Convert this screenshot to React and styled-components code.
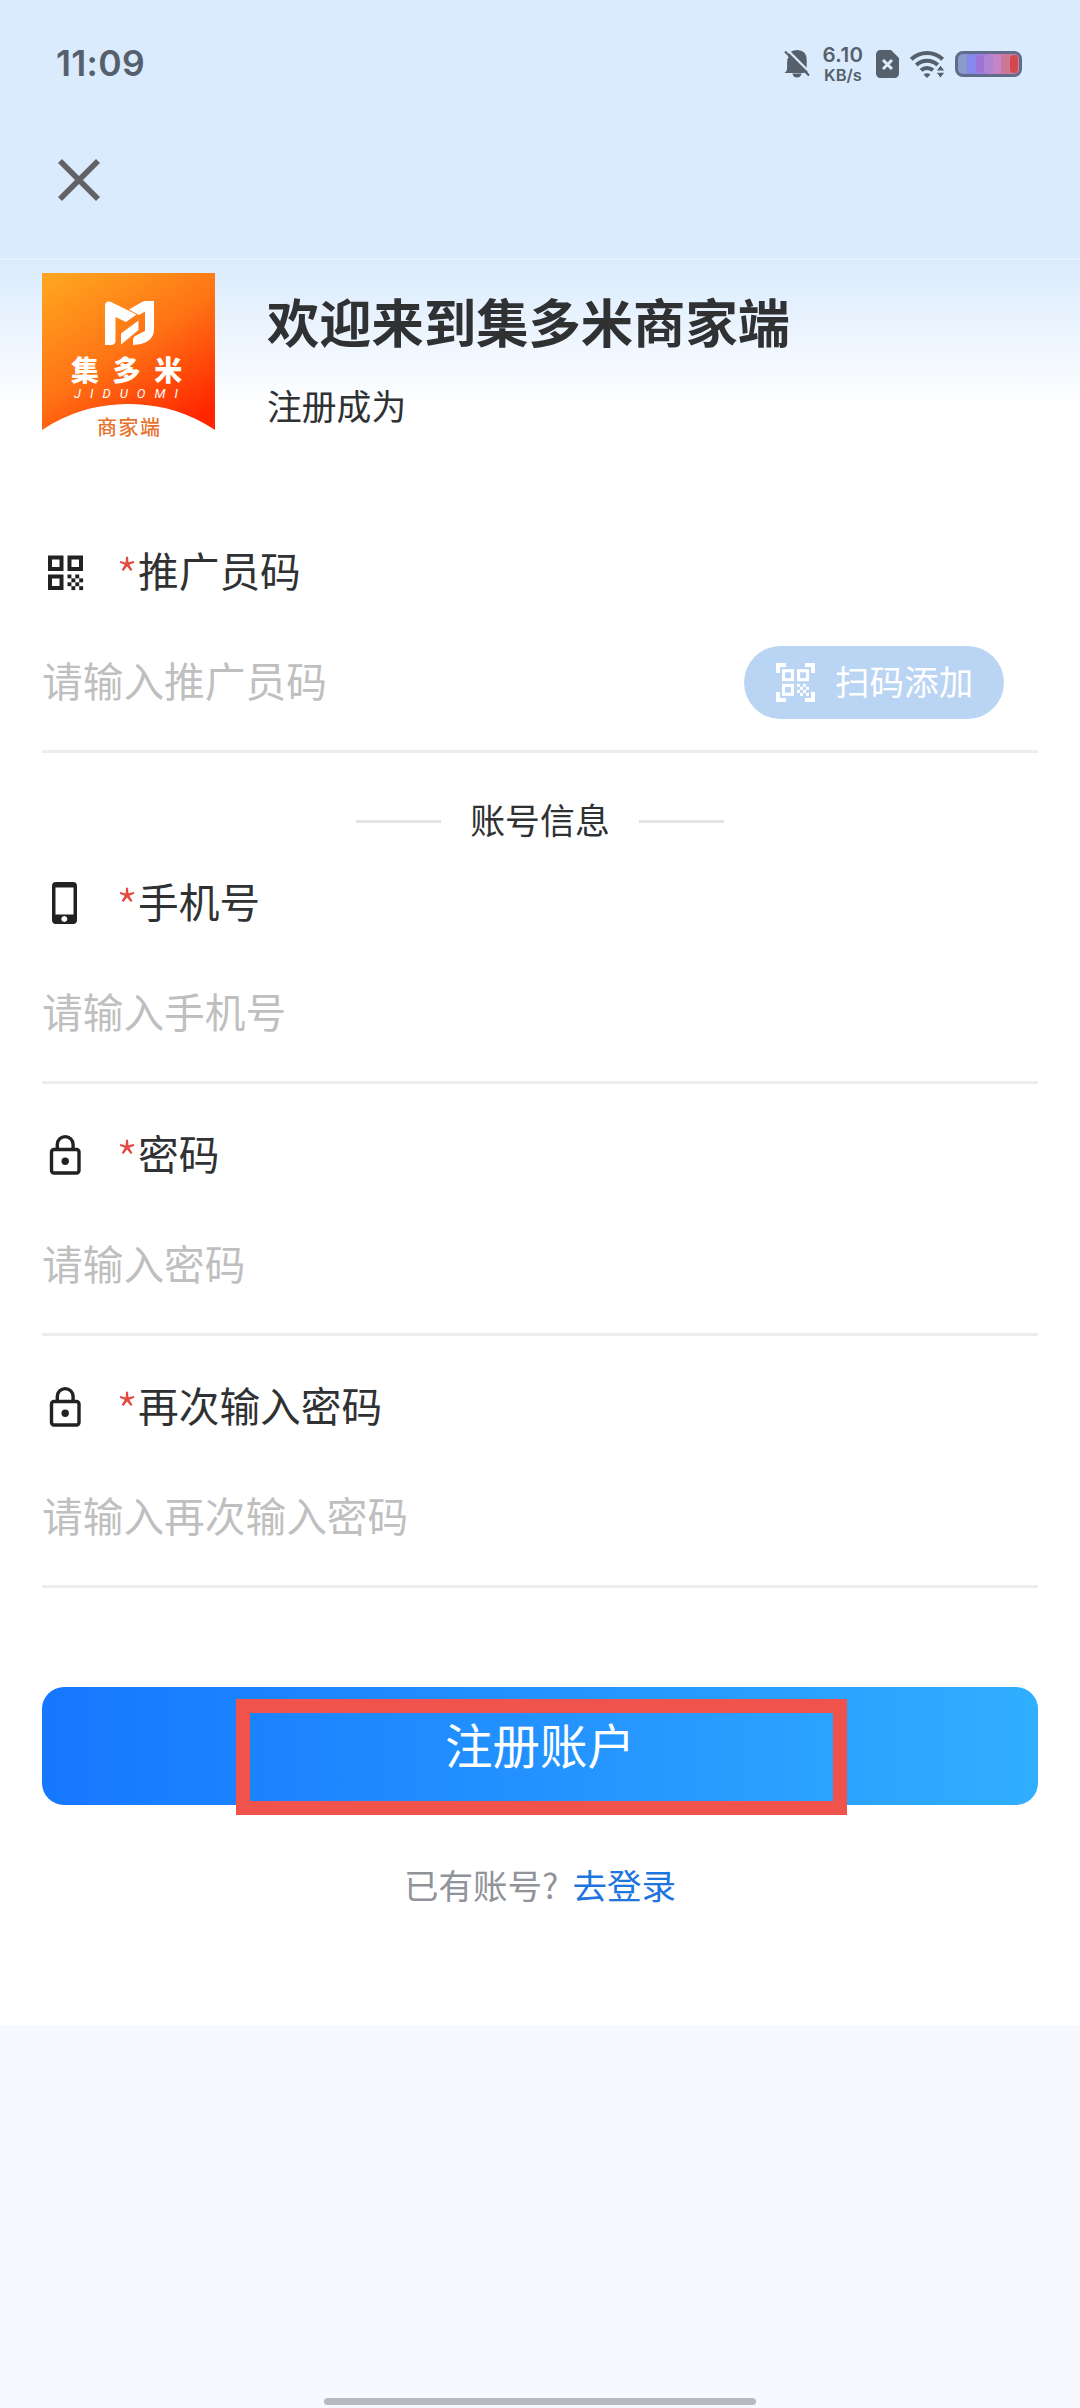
import React from "react";
import styled, { createGlobalStyle } from "styled-components";

const fields = [
  { name: "phone", label: "手机号", icon: "phone" },
  { name: "password", label: "密码", icon: "lock" },
  { name: "confirm", label: "再次输入密码", icon: "lock" },
];

const batteryColors = ["#8a9cc9", "#8787ec", "#9f74d9", "#b184d2", "#c684cb", "#cc7798", "#d4474f"];

const StatusIcons = () => {
  return (
    <StatusRight>
      <svg width="26" height="30" viewBox="0 0 26 30">
        <path d="M3.300 23.500V11Q3.300 1 13 1t9.700 10v8.500L24 22v1.500z" fill="#56606c" />
        <path d="M0.500 24q2.800-2 2.800-5v-6h6l11 11z" fill="#56606c" />
        <path d="M8.500 24.500h9a4.500 4 0 0 1-9 0z" fill="#56606c" />
        <path d="M3 0.500l24 24M0 5l4 4" stroke="#daebfd" strokeWidth="2.200" fill="none" />
        <path d="M1 2.500l24 24" stroke="#56606c" strokeWidth="2.200" fill="none" />
      </svg>
      <Speed>
        <b>6.10</b>
        <span>KB/s</span>
      </Speed>
      <svg width="23" height="28" viewBox="0 0 23 28">
        <path d="M4.500 0H15l8 8v15.500a4.500 4.500 0 0 1-4.500 4.500h-14A4.500 4.500 0 0 1 0 23.500v-19A4.500 4.500 0 0 1 4.500 0z" fill="#56606c" />
        <path d="M7 10l9 9M16 10l-9 9" stroke="#daebfd" strokeWidth="3" />
      </svg>
      <Wifi width="35" height="28" viewBox="0 0 35 28">
        <g fill="none" stroke="#56606c" strokeWidth="4">
          <path d="M1.300 9.300a22.500 22.500 0 0 1 31.400 0" />
          <path d="M6.300 15a15.500 15.500 0 0 1 21.400 0" />
          <path d="M11 20.300a9 9 0 0 1 12 0" />
        </g>
        <path d="M13.500 24.500q3.500-2.500 7 0L17 28z" fill="#56606c" />
        <path d="M26 21l4.500-6 4.500 6zM26 22.200h9l-4.500 6z" fill="#56606c" stroke="#daebfd" strokeWidth="1" />
      </Wifi>
      <Battery>
        {batteryColors.map((e, idx) => {
          return <Cell key={idx} $color={e} />;
        })}
      </Battery>
    </StatusRight>
  );
};

const Logo = () => {
  return (
    <svg width="173" height="173" viewBox="0 0 173 173">
      <defs>
        <linearGradient id="orange" x1="0.100" y1="0" x2="0.800" y2="1">
          <stop offset="0" stopColor="#ffa41f" />
          <stop offset="0.500" stopColor="#ff7415" />
          <stop offset="1" stopColor="#ff2500" />
        </linearGradient>
      </defs>
      <path d="M0 0H173V157Q134 131 86.500 131T0 157z" fill="url(#orange)" />
      <path d="M0 158Q39 131.500 86.500 131.500T173 158V173H0z" fill="#fff" />
      <g fill="#fff">
        <path d="M63 33q0-4 3-4.500 3-.4 5 1.500L94.500 41.500 84 49 73.500 44V68q0 4-5 4h-5.500z" />
        <path d="M87 36.500L100 29q2-1 4-1h8V56q0 8-6 12-5 3.500-15 4V67q0-3 3-4.500l9-4.500V38.500L97 42z" />
        <path d="M79 71.500V60.500l17.500-13v9.500z" />
      </g>
      <text x="29" y="107.500" fontSize="28" fontWeight="900" fill="#fff" letterSpacing="13.600">集多米</text>
      <text x="32" y="124.500" fontSize="13" fontStyle="italic" fontFamily="Roboto" fill="#fff" textLength="104">JIDUOMI</text>
      <text x="55" y="162" fontSize="20" fontWeight="500" fill="#e7742d" letterSpacing="1.500">商家端</text>
    </svg>
  );
};

// checker in the lower right corner of the code
const dots = [[0, 0], [2, 0], [1, 1], [3, 1], [0, 2], [2, 2], [1, 3], [3, 3]];

const QrMark = () => {
  return (
    <>
      <g fill="none" stroke="currentColor" strokeWidth="4">
        <rect x="2" y="2" width="11.500" height="11.500" />
        <rect x="21.500" y="2" width="11.500" height="11.500" />
        <rect x="2" y="21" width="11.500" height="11.500" />
      </g>
      {dots.map(([x, y], idx) => {
        return <rect key={idx} x={19.5 + x * 3.9} y={19 + y * 3.9} width="3.900" height="3.900" fill="currentColor" />;
      })}
    </>
  );
};

const FieldIcon = ({ type }) => {
  if (type === "qr") {
    return (
      <svg width="46" height="44" viewBox="-6 -5.500 46 44" color="#222">
        <QrMark />
      </svg>
    );
  } else if (type === "phone") {
    return (
      <svg width="46" height="44" viewBox="0 0 46 44">
        <path fillRule="evenodd" d="M14 1h17a4 4 0 0 1 4 4v34a4 4 0 0 1-4 4H14a4 4 0 0 1-4-4V5a4 4 0 0 1 4-4zM13.500 6.500v27h18v-27zM22.300 35a3 3 0 1 0 .01 0z" fill="#222" />
      </svg>
    );
  }
  return (
    <svg width="46" height="44" viewBox="0 0 46 44">
      <rect x="9.500" y="16.500" width="27.500" height="23.500" rx="2.500" fill="none" stroke="#222" strokeWidth="3.400" />
      <path d="M15.300 16v-4.500a7.900 7.900 0 0 1 15.800 0V16" fill="none" stroke="#222" strokeWidth="3.400" />
      <circle cx="23.200" cy="28.200" r="3.700" fill="#222" />
    </svg>
  );
};

const ScanIcon = () => {
  return (
    <svg width="39" height="39" viewBox="0 0 39 39">
      <path d="M2 10V2h8M29 2h8v8M2 29v8h8M29 37h8v-8" fill="none" stroke="#fff" strokeWidth="4" />
      <svg x="6" y="6" width="27" height="27" viewBox="0 0 35 34.500" color="#fff">
        <QrMark />
      </svg>
    </svg>
  );
};

const Field = ({ label, icon, children }) => {
  return (
    <FieldBox>
      <Label>
        <FieldIcon type={icon} />
        <Star>*</Star>
        <LabelText>{label}</LabelText>
      </Label>
      <InputRow>
        <Placeholder>请输入{label}</Placeholder>
        {children}
      </InputRow>
    </FieldBox>
  );
};

const App = () => {
  return (
    <>
      <GlobalStyle />
      <Page>
        <TopBar>
          <StatusBar>
            <Clock>11:09</Clock>
            <StatusIcons />
          </StatusBar>
          <Close width="42" height="42" viewBox="0 0 42 42">
            <path d="M2 2l38 38M40 2L2 40" stroke="#606266" strokeWidth="5.600" />
          </Close>
        </TopBar>
        <Content>
          <Intro>
            <Logo />
            <div>
              <Title>欢迎来到集多米商家端</Title>
              <SubTitle>注册成为</SubTitle>
            </div>
          </Intro>
          <Field label="推广员码" icon="qr">
            <ScanButton>
              <ScanIcon />
              <ScanText>扫码添加</ScanText>
            </ScanButton>
          </Field>
          <Divider>
            <DividerText>账号信息</DividerText>
          </Divider>
          {fields.map((e) => {
            return <Field key={e.name} label={e.label} icon={e.icon} />;
          })}
          <Submit>
            注册账户
            <Marker />
          </Submit>
          <Login>
            已有账号?<a>去登录</a>
          </Login>
        </Content>
        <Footer>
          <HomeBar />
        </Footer>
      </Page>
    </>
  );
};

const GlobalStyle = createGlobalStyle`
  * {
    box-sizing: border-box;
  }
  body {
    margin: 0;
    font-family: "Noto Sans CJK SC", sans-serif;
    color: #303133;
  }
  svg {
    display: block;
    flex-shrink: 0;
  }
`;

const Page = styled.div`
  width: 1080px;
  height: 2408px;
  display: flex;
  flex-direction: column;
  overflow: hidden;
  background-color: #f7f9fe;
`;

const TopBar = styled.div`
  height: 260px;
  background-color: #daebfd;
  border-bottom: 2px solid #e4f1fe;
`;

const StatusBar = styled.div`
  display: flex;
  justify-content: space-between;
  align-items: center;
  height: 128px;
  padding: 0 58px 0 56px;
`;

const Clock = styled.div`
  padding-bottom: 1px;
  font-family: Inter, sans-serif;
  font-size: 35.500px;
  font-weight: 600;
  letter-spacing: 0.3px;
  color: #56606c;
`;

const StatusRight = styled.div`
  display: flex;
  align-items: center;
`;

const Speed = styled.div`
  display: flex;
  flex-direction: column;
  align-items: center;
  width: 42px;
  margin: 0 12px;
  font-family: Inter, sans-serif;
  font-weight: 600;
  color: #56606c;

  b {
    font-size: 20.500px;
    line-height: 22px;
    font-weight: 600;
    letter-spacing: 0.4px;
  }
  span {
    font-size: 16.500px;
    line-height: 18px;
  }
`;

const Wifi = styled.svg`
  margin: 0 10px 0 11px;
`;

const Battery = styled.div`
  display: flex;
  width: 67px;
  height: 26px;
  padding: 1px;
  border: 3px solid #616b8a;
  border-radius: 8px;
  background: linear-gradient(90deg, #8a9cc9, #8787ec 25%, #a67ad6 42%, #c684cb 60%, #cc7798 80%, #c98aa0);
`;

const Cell = styled.div`
  flex: 1;
  border-radius: 4px;
  background-color: ${(props) => props.$color};
`;

const Close = styled.svg`
  margin: 31px 0 0 58px;
`;

const Content = styled.div`
  height: 1765px;
  padding: 13px 42px 0;
  background: linear-gradient(180deg, #daebfd 0, #fff 150px);
`;

const Intro = styled.div`
  display: flex;
  gap: 52px;
  height: 244px;
`;

const Title = styled.div`
  margin-top: 9px;
  font-size: 52.3px;
  line-height: 76px;
  font-weight: 700;
`;

const SubTitle = styled.div`
  margin-top: 22px;
  font-size: 34.800px;
  line-height: 50px;
`;

const FieldBox = styled.div`
  height: 236px;
  margin-bottom: 16px;
  border-bottom: 3px solid #ecedf1;
`;

const Label = styled.div`
  display: flex;
  align-items: center;
  height: 110px;
  font-size: 40.700px;
`;

const LabelText = styled.span`
  padding-bottom: 6px;
`;

const Star = styled.span`
  width: 22px;
  margin-left: 28px;
  padding-top: 4px;
  font-size: 50px;
  font-weight: 300;
  line-height: 60px;
  color: #e34a42;
`;

const InputRow = styled.div`
  display: flex;
  align-items: center;
  justify-content: space-between;
  height: 110px;
  padding-right: 34px;
`;

const Placeholder = styled.div`
  padding-bottom: 6px;
  font-size: 40.700px;
  color: #bfbfbf;
`;

const ScanButton = styled.div`
  display: flex;
  align-items: center;
  gap: 20px;
  width: 260px;
  height: 73px;
  padding-left: 32px;
  border-radius: 37px;
  color: #fff;
  background-color: #bad5f3;
`;

const ScanText = styled.span`
  padding-bottom: 4px;
  font-size: 34.560px;
`;

const Divider = styled.div`
  display: flex;
  align-items: center;
  justify-content: center;
  gap: 29px;
  height: 80px;
  margin: 28px 0 -13px;

  &::before,
  &::after {
    content: "";
    width: 85px;
    height: 3px;
    background-color: #e3e3e3;
  }
`;

const DividerText = styled.span`
  padding-bottom: 4px;
  font-size: 34.900px;
`;

const Submit = styled.div`
  position: relative;
  height: 118px;
  margin-top: 99px;
  border-radius: 22px;
  font-size: 47.500px;
  line-height: 114px;
  text-align: center;
  color: #fff;
  background: linear-gradient(90deg, #1677ff, #30aeff);
`;

// red frame laid over the button
const Marker = styled.div`
  position: absolute;
  left: 194px;
  top: 12px;
  width: 611px;
  height: 116px;
  border: 14px solid #f0524c;
`;

const Login = styled.div`
  margin-top: 54px;
  font-size: 34.560px;
  line-height: 50px;
  text-align: center;
  color: #909399;

  a {
    margin-left: 14px;
    color: #1f75e0;
  }
`;

const Footer = styled.div`
  flex: 1;
  display: flex;
  align-items: flex-end;
  justify-content: center;
  padding-bottom: 3px;
`;

const HomeBar = styled.div`
  width: 432px;
  height: 7px;
  border-radius: 4px;
  background-color: #b9babf;
`;

export default App;
